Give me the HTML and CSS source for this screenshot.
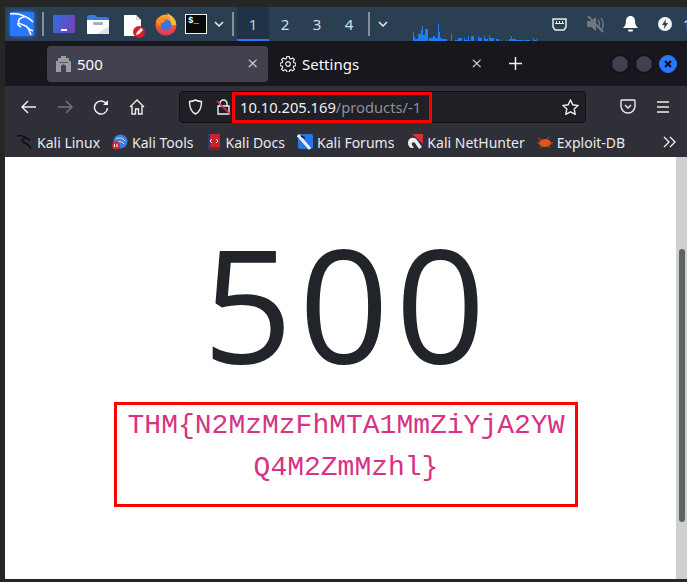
FILE: index.html
```html
<!DOCTYPE html>
<html lang="en">
<head>
    <meta charset="UTF-8">
    <title>500</title>
    <link rel="stylesheet" href="styles.css">
</head>
<body>
    <div class="panel">
        <div class="kali-logo">
            <svg width="24" height="24" viewBox="0 0 24 24"><path d="M0 2c5-1 10 0 14 2 3 1 6 3 9 6M15 4.500c-4 1-8 3-6 6.500 2 2 7 2 9 5 1 2 2 4 3 7M8 11c-1 2 1 3 3 4M18 16c1 1 3 2 5 3" fill="none" stroke="#fff" stroke-width="1.600"/></svg>
        </div>
        <span class="sep"></span>
        <span class="desktop-icon"><i></i></span>
        <svg class="folder" width="22" height="20" viewBox="0 0 22 20"><path d="M0 3q0-2 2-2h6l2 2h10q2 0 2 2v2H0z" fill="#2f7de0"/><path d="M0 6h22v14H0z" fill="#fff"/><path d="M22 12v8H10z" fill="#dfe3e6"/><rect x="6" y="8" width="10" height="3" rx="1" fill="#a9afb5"/></svg>
        <svg class="doc" width="24" height="24" viewBox="0 0 24 24"><path d="M2 1h12l5 5v16H2z" fill="#fff"/><path d="M14 1l5 5h-5z" fill="#d5d8da"/><circle cx="17" cy="18" r="6" fill="#d4202a"/><path d="M14 21l1-3 4-4 2 2-4 4z" fill="#fff"/></svg>
        <svg class="firefox" width="24" height="24" viewBox="0 0 24 24"><defs><linearGradient id="ffx" x1="0" y1="0" x2="0" y2="1"><stop offset="0" stop-color="#ffb02e"/><stop offset=".6" stop-color="#f2503a"/><stop offset="1" stop-color="#e5335f"/></linearGradient></defs><circle cx="12" cy="13" r="10.500" fill="url(#ffx)"/><path d="M13 1c4 2 9 6 9 12h-5c0-4-2-7-4-12z" fill="#ffbd2e"/><circle cx="12" cy="13" r="5.500" fill="#3f73e0"/><path d="M2 9c1-3 3-4 4-4 0 2 3 2 5 3 1 1-1 2-3 3-2 0-1 3-1 3-3-1-5-3-5-5z" fill="#ff8a1f"/></svg>
        <span class="term-icon">$_</span>
        <svg class="chev chev-first" width="10" height="6" viewBox="0 0 10 6"><path d="M1 1l4 4 4-4" fill="none" stroke="#e8ecef" stroke-width="1.500"/></svg>
        <span class="sep sep-b"></span>
        <div class="workspaces">
            <span class="ws active">1</span>
            <span class="ws">2</span>
            <span class="ws">3</span>
            <span class="ws">4</span>
        </div>
        <span class="sep sep-c"></span>
        <svg class="chev chev-second" width="10" height="6" viewBox="0 0 10 6"><path d="M1 1l4 4 4-4" fill="none" stroke="#e8ecef" stroke-width="1.500"/></svg>
        <svg class="cpu-graph" width="128" height="18" viewBox="0 0 128 18"><path d="M0 18v-9h1v9zM1 18v-5h1v5zM2 18v-2h3v2zM5 18v-7h3v7zM8 18V7h1v11zM9 18V3h1v15zM10 18v-6h2v6zM12 18V6h3v12zM16 18v-3h4v3zM20 18v-5h2v5zM22 18v-3h7v3zM25 18V1h1v17zM26 18V9h1v9zM29 18v-2h5v2zM38 18v-7h1v7zM42 18v-1h3v1zM45 18v-3h4v3zM51 18v-3h1v3zM52 18v-1h5v1zM55 18v-5h1v5zM58 18v-5h3v5zM65 18v-5h1v5zM66 18v-3h3v3zM71 18v-5h1v5zM72 18v-2h3v2zM76 18v-6h1v6zM77 18v-3h4v3zM83 18v-2h3v2zM88 18v-1h1v1zM93 18v-1h1v1zM98 18v-5h1v5zM96 18v-2h7v2zM103 18v-1h8v1zM112 18v-1h5v1zM120 18v-3h1v3zM121 18v-1h2v1zM123 18v-2h1v2z" fill="#1f7cf2"/></svg>
        <svg class="net" width="15" height="13" viewBox="0 0 15 13"><path d="M1 1h13v8l-2 3H3L1 9z" fill="none" stroke="#e8ecef" stroke-width="1.500"/><path d="M4 3h1v2H4zM7 3h1v2H7zM10 3h1v2h-1zM3 5h9v1H3z" fill="#e8ecef"/></svg>
        <svg class="mute" width="19" height="18" viewBox="0 0 19 18"><path d="M1 6h4l5-4v14l-5-4H1z" fill="#6f7780"/><path d="M12 5c2 2 2 6 0 8M15 3c3 3 3 9 0 12" fill="none" stroke="#6f7780" stroke-width="1.500"/><path d="M2 1l15 16" stroke="#6f7780" stroke-width="2"/></svg>
        <svg class="bell" width="15" height="16" viewBox="0 0 15 16"><path d="M7.500 0c3 0 4.500 2.500 4.500 5 0 4 2 6 3 7H0c1-1 3-3 3-7 0-2.500 1.500-5 4.500-5z" fill="#fff"/><rect x="5" y="13.500" width="5" height="2" rx="1" fill="#fff"/></svg>
        <svg class="power" width="14" height="14" viewBox="0 0 14 14"><circle cx="7" cy="7" r="7" fill="#f2f4f5"/><path d="M8 2L4 8h2.500L6 12l4-6H7.500z" fill="#2a3f52"/></svg>
        <span class="clock">1</span>
    </div>

    <div class="tabbar">
        <div class="tab current">
            <svg class="tab-icon" width="15" height="17" viewBox="0 0 15 17"><path d="M5 1h5v2h3v3h2v11h-5v-5a2.500 2.500 0 0 0-5 0v5H0V6h2V3h3z" fill="#9a9ba3"/><path d="M3 7h9v1H3z" fill="#55565e"/></svg>
            <span class="tab-title">500</span>
            <span class="tab-close">&times;</span>
        </div>
        <div class="tab">
            <svg class="tab-icon" width="16" height="16" viewBox="0 0 16 16"><path d="M6.800 1h2.400l.4 2 1.300.6 1.800-1.100 1.700 1.700-1.100 1.800.6 1.300 2 .4v2.400l-2 .4-.6 1.300 1.100 1.800-1.700 1.700-1.800-1.100-1.300.6-.4 2H6.800l-.4-2-1.300-.6-1.800 1.100-1.700-1.700 1.100-1.800-.6-1.300-2-.4V7.700l2-.4.6-1.300-1.100-1.800 1.700-1.700 1.800 1.100 1.300-.6z" transform="translate(0 -.5)" fill="none" stroke="#e8e8ec" stroke-width="1.200"/><circle cx="8" cy="8" r="2.300" fill="none" stroke="#e8e8ec" stroke-width="1.200"/></svg>
            <span class="tab-title">Settings</span>
            <span class="tab-close">&times;</span>
        </div>
        <svg class="new-tab" width="13" height="13" viewBox="0 0 13 13"><path d="M6.500 0v13M0 6.500h13" stroke="#f4f4f6" stroke-width="1.500"/></svg>
        <div class="win-btns">
            <span class="win-btn"></span>
            <span class="win-btn"></span>
            <span class="win-btn close"><svg width="8" height="8" viewBox="0 0 8 8"><path d="M1 1l6 6M7 1l-6 6" stroke="#101018" stroke-width="2.200"/></svg></span>
        </div>
    </div>

    <div class="navbar">
        <svg class="nav-icon back" width="16" height="14" viewBox="0 0 16 14"><path d="M7 1L1 7l6 6M1 7h14" fill="none" stroke="#eee" stroke-width="1.500"/></svg>
        <svg class="nav-icon forward" width="16" height="14" viewBox="0 0 16 14"><path d="M9 1l6 6-6 6M15 7H1" fill="none" stroke="#74747c" stroke-width="1.500"/></svg>
        <svg class="nav-icon reload" width="16" height="16" viewBox="0 0 16 16"><path d="M13.500 5A6.500 6.500 0 1 0 14.500 9" fill="none" stroke="#eee" stroke-width="1.500"/><path d="M15 1v5h-5z" fill="#eee"/></svg>
        <svg class="nav-icon home" width="16" height="16" viewBox="0 0 16 16"><path d="M1 8l7-7 7 7M3 7v8h3.500v-5h3v5H13V7" fill="none" stroke="#eee" stroke-width="1.400"/></svg>
        <div class="urlbar">
            <svg class="shield" width="15" height="16" viewBox="0 0 15 16"><path d="M7.500 1c2 1 4 1.500 6 1.500 0 6-2 10.500-6 12.500-4-2-6-6.500-6-12.500 2 0 4-.5 6-1.500z" fill="none" stroke="#eee" stroke-width="1.400"/></svg>
            <svg class="lock" width="15" height="16" viewBox="0 0 15 16"><path d="M4 7V4.500a3.500 3.500 0 0 1 7 0V7M2 7h11v8H2z" fill="none" stroke="#eee" stroke-width="1.400"/><path d="M1 2l13 13" stroke="#e22850" stroke-width="1.500"/></svg>
            <span class="url-host">10.10.205.169</span><span class="url-path">/products/-1</span>
            <svg class="star" width="17" height="16" viewBox="0 0 17 16"><path d="M8.500 1l2.300 4.800 5.200.7-3.800 3.600 1 5.200-4.700-2.500-4.700 2.500 1-5.200L1 6.500l5.200-.7z" fill="none" stroke="#eee" stroke-width="1.400"/></svg>
            <span class="url-mark"></span>
        </div>
        <svg class="pocket" width="16" height="15" viewBox="0 0 16 15"><path d="M2 1h12q1 0 1 1v5a7 7 0 0 1-14 0V2q0-1 1-1z" fill="none" stroke="#eee" stroke-width="1.400"/><path d="M5 6l3 3 3-3" fill="none" stroke="#eee" stroke-width="1.400"/></svg>
        <svg class="menu" width="14" height="12" viewBox="0 0 14 12"><path d="M1 1h12M1 6h12M1 11h12" stroke="#eee" stroke-width="1.400"/></svg>
    </div>

    <div class="bookmarks">
        <a class="bm">
            <svg width="16" height="16" viewBox="0 0 16 16"><path d="M0 2c3-1 7 0 9 2-3 0-5 2-3 4 2 1 6 2 8 7M9 4l4 2" fill="none" stroke="#0c0c0e" stroke-width="1.500"/></svg>
            Kali Linux
        </a>
        <a class="bm">
            <svg width="16" height="16" viewBox="0 0 16 16"><circle cx="8.500" cy="7.500" r="7" fill="#3a7fe0"/><path d="M4 5c3-2 7-1 9 2M6 8c2-1 5 0 6 2" fill="none" stroke="#cfe4fa"/><circle cx="4" cy="11.500" r="4" fill="#e0202c"/><path d="M2.500 10v3M5 10v3" stroke="#fff"/></svg>
            Kali Tools
        </a>
        <a class="bm">
            <svg width="16" height="16" viewBox="0 0 16 16"><path d="M2 0h12v13H2z" fill="#c8222c"/><path d="M2 13h12v3H2z" fill="#8e1620"/><path d="M6 5L4 7l2 2M10 5l2 2-2 2" fill="none" stroke="#fff"/><path d="M2 0h2v16H2z" fill="#1f3f80"/></svg>
            Kali Docs
        </a>
        <a class="bm">
            <svg width="16" height="16" viewBox="0 0 16 16"><rect x="1" y="0" width="15" height="15" rx="2" fill="#2777e8"/><path d="M1 1l12 14" stroke="#eee" stroke-width="3"/><path d="M4 2l4 2" stroke="#222" stroke-width="1.500"/></svg>
            Kali Forums
        </a>
        <a class="bm">
            <svg width="16" height="16" viewBox="0 0 16 16"><path d="M5 0h11v10z" fill="#d8303a"/><path d="M1 9c0-5 6-7 9-3l5 7-3 2-4-6c-2-2-4 0-3 2l2 3H5C3 14 1 12 1 9z" fill="#eee"/></svg>
            Kali NetHunter
        </a>
        <a class="bm">
            <svg width="16" height="14" viewBox="0 0 16 14"><ellipse cx="8" cy="8" rx="6" ry="4" fill="#e0561a"/><path d="M1 3l4 3M12 2l-2 3M0 8h3M13 8h3M3 13l2-3M13 13l-2-3" stroke="#c04a14"/></svg>
            Exploit-DB
        </a>
        <svg class="bm-more" width="13" height="12" viewBox="0 0 13 12"><path d="M1 1l5 5-5 5M7 1l5 5-5 5" fill="none" stroke="#eee" stroke-width="1.400"/></svg>
    </div>

    <main class="content">
        <h1 class="code">500</h1>
        <div class="flag-box">
            <code class="flag">THM{N2MzMzFhMTA1MmZiYjA2YWQ4M2ZmMzhl}</code>
        </div>
        <div class="scroll-track"><span class="scroll-thumb"></span></div>
    </main>
</body>
</html>
```

FILE: styles.css
```css
html, body { margin: 0; padding: 0; }
body { width: 687px; height: 582px; overflow: hidden; background-color: #262626; font-family: "Noto Sans", sans-serif; box-sizing: border-box; padding: 7px 0 3px 5px; display: flex; flex-direction: column; }
svg { display: block; flex: none; }

/* desktop panel */
.panel { height: 34px; background-color: #2a3f52; display: flex; align-items: center; flex: none; overflow: hidden; }
.kali-logo { width: 24px; height: 24px; margin-left: 5px; background-color: #2777ff; box-shadow: 0 0 5px #2777ff; flex: none; }
.sep { width: 2px; height: 24px; background-color: #87909a; margin-left: 8px; flex: none; }
.desktop-icon { width: 22px; height: 18px; margin-left: 9px; background: linear-gradient(110deg, #2f6fe0, #7a3fb8); display: flex; justify-content: center; align-items: flex-end; flex: none; }
.desktop-icon i { width: 6px; height: 2px; margin-bottom: 2px; background-color: #fff; }
.folder { margin-left: 12px; }
.doc { margin-left: 13px; margin-top: 4px; }
.firefox { margin-left: 8px; margin-top: -1px; }
.term-icon { height: 18px; width: 18px; margin-left: 7px; background-color: #0a0a0a; border: 1px solid #f0f0f0; color: #fff; font: bold 9px/12px "Liberation Mono", monospace; padding-left: 2px; flex: none; }
.chev-first { margin-left: 7px; }
.sep-b { margin-left: 8px; }
.workspaces { display: flex; margin-left: 3px; height: 34px; flex: none; }
.ws { width: 32px; height: 34px; box-sizing: border-box; text-align: center; font-size: 15px; line-height: 34px; color: #d4dfe8; }
.ws.active { background-color: #1f3347; border-bottom: 2px solid #2777ff; color: #b8d0e4; }
.sep-c { margin-left: 3px; }
.chev-second { margin-left: 8px; }
.cpu-graph { margin-left: 25px; margin-top: 16px; }
.net { margin-left: 11px; }
.mute { margin-left: 19px; }
.bell { margin-left: 18px; }
.power { margin-left: 20px; }
.clock { margin-left: 11px; font-size: 15px; color: #e8ecef; }

/* tabs */
.tabbar { height: 45px; background-color: #17171d; display: flex; align-items: center; flex: none; }
.tab { width: 221px; height: 36px; box-sizing: border-box; margin-left: 42px; padding: 0 9px; border-radius: 4px; display: flex; align-items: center; color: #fbfbfe; font-size: 15px; flex: none; }
.tab + .tab { margin-left: 0; padding-left: 12px; width: 224px; }
.tab.current { background-color: #42414d; }
.tab-title { margin-left: 6px; flex: 1; }
.tab-close { font-size: 19px; line-height: 1; font-weight: 300; margin-right: 1px; color: #e8e8ec; }
.new-tab { margin-left: 17px; }
.win-btns { display: flex; gap: 6px; margin-left: 89px; }
.win-btn { width: 16px; height: 16px; border-radius: 50%; background-color: #3d4150; border: 1px solid #0c0c10; display: flex; align-items: center; justify-content: center; }
.win-btn.close { background-color: #2777ff; border-color: #2777ff; }

/* toolbar */
.navbar { height: 41px; background-color: #2f2f37; display: flex; align-items: center; flex: none; }
.back { margin-left: 16px; }
.forward { margin-left: 20px; }
.reload { margin-left: 20px; }
.home { margin-left: 20px; }
.urlbar { position: relative; width: 407px; height: 32px; box-sizing: border-box; margin-left: 34px; background-color: #1f1f26; border: 1px solid #101014; border-radius: 4px; display: flex; align-items: center; font-size: 14.7px; flex: none; }
.shield { margin-left: 8px; }
.lock { margin-left: 13px; }
.url-host { margin-left: 9px; color: #f0f0f4; }
.url-path { color: #8f8f9d; }
.star { margin-left: auto; margin-right: 6px; }
.url-mark { position: absolute; left: 52px; top: 0; width: 200px; height: 31px; box-sizing: border-box; border: 3px solid #f00; }
.pocket { margin-left: 34px; }
.menu { margin-left: 20px; }

/* bookmarks */
.bookmarks { height: 30px; background-color: #2f2f37; display: flex; align-items: center; padding-left: 12px; flex: none; }
.bm { display: flex; align-items: center; gap: 4px; margin-right: 12px; color: #eaeaee; font-size: 14px; white-space: nowrap; }
.bm:nth-child(4) { margin-right: 13px; }
.bm-more { margin-left: 26px; }

/* page */
.content { position: relative; flex: 1; background-color: #fff; display: flex; flex-direction: column; align-items: center; overflow: hidden; }
.code { margin: 45px 0 0; font-family: "Open Sans", sans-serif; font-weight: 500; font-size: 158px; line-height: 200px; letter-spacing: 6px; text-indent: 2px; color: #212529; }
.flag-box { width: 464px; height: 105px; box-sizing: border-box; padding: 0 10px; border: 3px solid #f00; text-align: center; }
.flag { font-family: "Liberation Mono", monospace; font-size: 28px; line-height: 42px; color: #d63384; overflow-wrap: anywhere; }
.scroll-track { position: absolute; top: 0; right: 0; width: 11px; height: 100%; background-color: #cfcfcf; }
.scroll-thumb { position: absolute; top: 92px; left: 3px; width: 6px; height: 273px; border-radius: 3px; background-color: #5a6461; }
```
